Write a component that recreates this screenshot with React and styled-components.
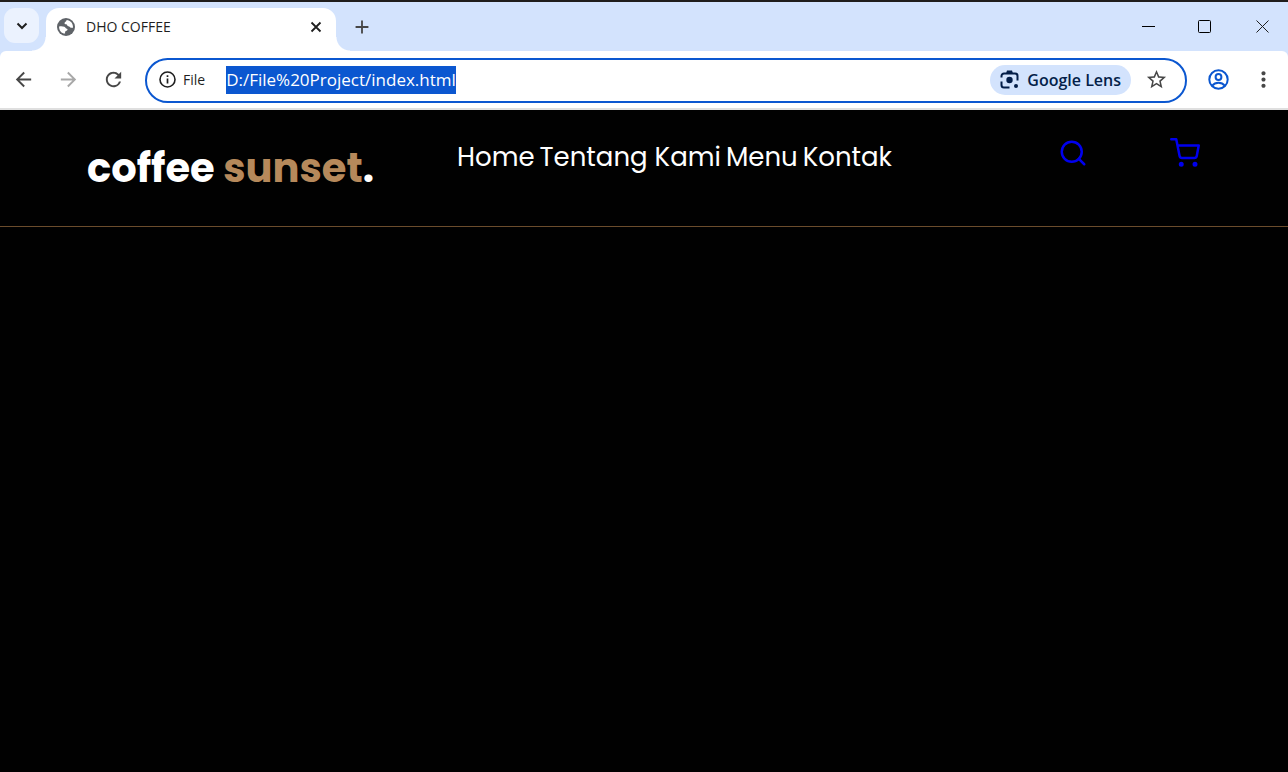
import React from "react";
import styled, { createGlobalStyle } from "styled-components";
import { FiSearch, FiShoppingCart } from "react-icons/fi";
import { MdArrowBack, MdArrowForward, MdRefresh, MdStarBorder, MdMoreVert, MdAdd } from "react-icons/md";

const GlobalStyle = createGlobalStyle`
  * { box-sizing: border-box; }
  html, body, #root { height: 100%; }
  body { margin: 0; background: #000; }
  button, input { font: inherit; border: 0; padding: 0; margin: 0; }
`;

const Window = styled.div`
  min-height: 100%;
  display: flex;
  flex-direction: column;
  border-top: 2px solid #1f1d1c;
  background: #d3e3fd;
  font-family: "Open Sans", "Noto Sans", sans-serif;
  color: #1f1f1f;
`;

const TabStrip = styled.header`
  display: flex;
  align-items: flex-start;
  height: 49px;
  padding: 6px 0 0 4px;
`;

const IconButton = styled.button`
  display: flex;
  align-items: center;
  justify-content: center;
  flex: none;
  width: ${(p) => p.$w || 32}px;
  height: ${(p) => p.$h || 32}px;
  border-radius: ${(p) => p.$radius || 0}px;
  background: ${(p) => p.$bg || "transparent"};
  color: ${(p) => p.$color || "#474747"};
`;

const Tab = styled.div`
  position: relative;
  display: flex;
  align-items: center;
  width: 290px;
  height: 43px;
  margin-left: 7px;
  padding: 0 10px 6px 11px;
  border-radius: 13px 13px 0 0;
  background: #fff;

  &::before,
  &::after {
    content: "";
    position: absolute;
    bottom: 0;
    width: 14px;
    height: 14px;
  }
  &::before {
    right: 100%;
    background: radial-gradient(circle at 0 0, transparent 13px, #fff 14px);
  }
  &::after {
    left: 100%;
    background: radial-gradient(circle at 100% 0, transparent 13px, #fff 14px);
  }
`;

const TabTitle = styled.span`
  flex: 1;
  margin-left: 11px;
  font-size: 14px;
  line-height: 20px;
  font-weight: 400;
`;

const WindowControls = styled.div`
  display: flex;
  gap: 4px;
  margin-left: auto;
`;

const Toolbar = styled.div`
  display: flex;
  align-items: center;
  height: 59px;
  padding: 0 9px 0 7px;
  border-bottom: 2px solid #dfdfdf;
  border-radius: 6px 6px 0 0;
  background: #fff;
`;

const ButtonGroup = styled.div`
  display: flex;
  gap: 13px;
`;

const AddressBar = styled.div`
  display: flex;
  align-items: center;
  flex: 1;
  height: 45px;
  margin: 2px 15px 0 16px;
  padding: 0 13px 2px 12px;
  border: 2px solid #0b57d0;
  border-radius: 23px;
`;

const SchemeLabel = styled.label`
  display: flex;
  align-items: center;
  gap: 7px;
  margin-right: 21px;
  font-size: 14px;
  line-height: 20px;
  font-weight: 500;
`;

const AddressInput = styled.input`
  field-sizing: content;
  height: 28px;
  background: #0b57d0;
  color: #fff;
  font-size: 17px;
  line-height: 28px;
  outline: none;
`;

const LensButton = styled.button`
  display: flex;
  align-items: center;
  gap: 8px;
  height: 30px;
  margin: 0 9px 0 auto;
  padding: 0 10px;
  border-radius: 15px;
  background: #d3e3fd;
  color: #041e49;
  font-size: 16px;
  line-height: 20px;
  font-weight: 600;
`;

const Page = styled.main`
  flex: 1;
  background: #010101;
  font-family: Poppins, Inter, sans-serif;
`;

const Navbar = styled.nav`
  display: flex;
  align-items: flex-start;
  height: 117px;
  padding: 28px 88px 0 87px;
  border-bottom: 1px solid #6b4c2c;
`;

const Logo = styled.a`
  width: 370px;
  padding-top: 2px;
  color: #fff;
  font-size: 40px;
  line-height: 56px;
  font-weight: 700;
  text-decoration: none;
  white-space: nowrap;

  span { color: #b6895b; }
`;

const NavLinks = styled.div`
  display: flex;
  gap: 5px;
`;

const NavLink = styled.a`
  color: #fff;
  font-size: 26px;
  line-height: 38px;
  text-decoration: none;
  white-space: nowrap;
`;

const NavExtra = styled.div`
  display: flex;
  gap: 82px;
  margin-left: auto;
`;

const ExtraLink = styled.a`
  display: flex;
  color: #00e;
`;

const GlobeIcon = () => (
  <svg width="18" height="18" viewBox="0 0 18 18" aria-hidden="true">
    <circle cx="9" cy="9" r="9" fill="#5f6368" />
    <path d="M9.500 2C10 3.500 8 3.400 7.600 4.700c-.300 1.200.500 1.500 1.600 1.500 1 0 .800 1.300 1.600 1.800.900.600 1.700.300 2.300 1.200.500.800 1.300.700 2.900.500C16.300 5.500 13.500 2.200 9.500 2Z" fill="#fff" />
    <path d="M2.100 8.400C3.500 8 6 8 7.300 8.800c1.300.700 1.400 1.800 2.600 2 .900.200.800 1.600-.300 1.900-1.200.400-1.700.800-1.500 2.900C4.500 15.600 1.900 12.300 2.100 8.400Z" fill="#fff" />
  </svg>
);

const ChevronIcon = () => (
  <svg width="12" height="8" viewBox="0 0 12 8" aria-hidden="true">
    <path d="m1.500 1.500 4.500 4.500 4.500-4.500" fill="none" stroke="currentColor" strokeWidth="2" />
  </svg>
);

const InfoIcon = () => (
  <svg width="17" height="17" viewBox="0 0 17 17" aria-hidden="true">
    <circle cx="8.500" cy="8.500" r="7.500" fill="none" stroke="currentColor" strokeWidth="1.600" />
    <path d="M8.500 7.500v5M8.500 4.300v1.800" stroke="currentColor" strokeWidth="1.700" />
  </svg>
);

const LensIcon = () => (
  <svg width="19" height="19" viewBox="0 0 19 19" aria-hidden="true">
    <g fill="none" stroke="currentColor" strokeWidth="2">
      <path d="M1.500 7.500V6A2.500 2.500 0 0 1 4 3.500h11A2.500 2.500 0 0 1 17.500 6v4.500" />
      <path d="M1.500 11.500V15A2.500 2.500 0 0 0 4 17.500h5.500" />
    </g>
    <path d="M6 3.500 7 .500h5l1 3Z" fill="currentColor" />
    <circle cx="9.500" cy="10" r="3.200" fill="currentColor" />
    <circle cx="16" cy="16" r="2" fill="currentColor" />
  </svg>
);

const ProfileIcon = () => (
  <svg width="21" height="21" viewBox="0 0 21 21" fill="none" stroke="currentColor" strokeWidth="2" aria-hidden="true">
    <circle cx="10.500" cy="10.500" r="9.200" />
    <circle cx="10.500" cy="8" r="2.900" />
    <path d="M4 16.800c1.700-2 4-3 6.500-3s4.800 1 6.500 3" />
  </svg>
);

const MinimizeIcon = () => (
  <svg width="13" height="13" viewBox="0 0 13 13" aria-hidden="true">
    <path d="M0 6.500h13" stroke="currentColor" />
  </svg>
);

const MaximizeIcon = () => (
  <svg width="13" height="13" viewBox="0 0 13 13" aria-hidden="true">
    <rect x=".5" y=".5" width="12" height="12" rx="1" fill="none" stroke="currentColor" />
  </svg>
);

const CloseIcon = () => (
  <svg width="13" height="13" viewBox="0 0 13 13" aria-hidden="true">
    <path d="m.5.5 12 12m0-12-12 12" stroke="currentColor" />
  </svg>
);

const TabCloseIcon = () => (
  <svg width="12" height="12" viewBox="0 0 12 12" aria-hidden="true">
    <path d="m1.500 1.500 9 9m0-9-9 9" stroke="currentColor" strokeWidth="1.800" />
  </svg>
);

const links = ["Home", "Tentang Kami", "Menu", "Kontak"];

export default function App() {
  return (
    <Window>
      <GlobalStyle />
      <TabStrip>
        <IconButton aria-label="Search tabs" $w={35} $h={35} $radius={11} $bg="#ebf2fe" $color="#1f1f1f"><ChevronIcon /></IconButton>
        <Tab>
          <GlobeIcon />
          <TabTitle>DHO COFFEE</TabTitle>
          <IconButton aria-label="Close tab" $w={20} $h={20} $color="#1f1f1f"><TabCloseIcon /></IconButton>
        </Tab>
        <IconButton aria-label="New tab" $w={52} $h={37}><MdAdd size={22} /></IconButton>
        <WindowControls>
          <IconButton aria-label="Minimize" $w={48} $h={37} $color="#000"><MinimizeIcon /></IconButton>
          <IconButton aria-label="Maximize" $w={56} $h={37} $color="#000"><MaximizeIcon /></IconButton>
          <IconButton aria-label="Close" $w={52} $h={37} $color="#1f1f1f"><CloseIcon /></IconButton>
        </WindowControls>
      </TabStrip>
      <Toolbar>
        <ButtonGroup>
          <IconButton aria-label="Back"><MdArrowBack size={23} /></IconButton>
          <IconButton aria-label="Forward" $color="#a8a8a8"><MdArrowForward size={23} /></IconButton>
          <IconButton aria-label="Reload"><MdRefresh size={23} /></IconButton>
        </ButtonGroup>
        <AddressBar>
          <SchemeLabel htmlFor="address"><InfoIcon />File</SchemeLabel>
          <AddressInput id="address" defaultValue="D:/File%20Project/index.html" />
          <LensButton><LensIcon />Google Lens</LensButton>
          <IconButton aria-label="Bookmark"><MdStarBorder size={23} /></IconButton>
        </AddressBar>
        <ButtonGroup>
          <IconButton aria-label="Profile" $color="#0b57d0"><ProfileIcon /></IconButton>
          <IconButton aria-label="Menu"><MdMoreVert size={25} /></IconButton>
        </ButtonGroup>
      </Toolbar>
      <Page>
        <Navbar>
          <Logo href="#home">coffee <span>sunset</span>.</Logo>
          <NavLinks>
            {links.map((label) => <NavLink key={label} href="#home">{label}</NavLink>)}
          </NavLinks>
          <NavExtra>
            <ExtraLink href="#search" aria-label="Search"><FiSearch size={30} /></ExtraLink>
            <ExtraLink href="#cart" aria-label="Shopping cart"><FiShoppingCart size={30} /></ExtraLink>
          </NavExtra>
        </Navbar>
      </Page>
    </Window>
  );
}
